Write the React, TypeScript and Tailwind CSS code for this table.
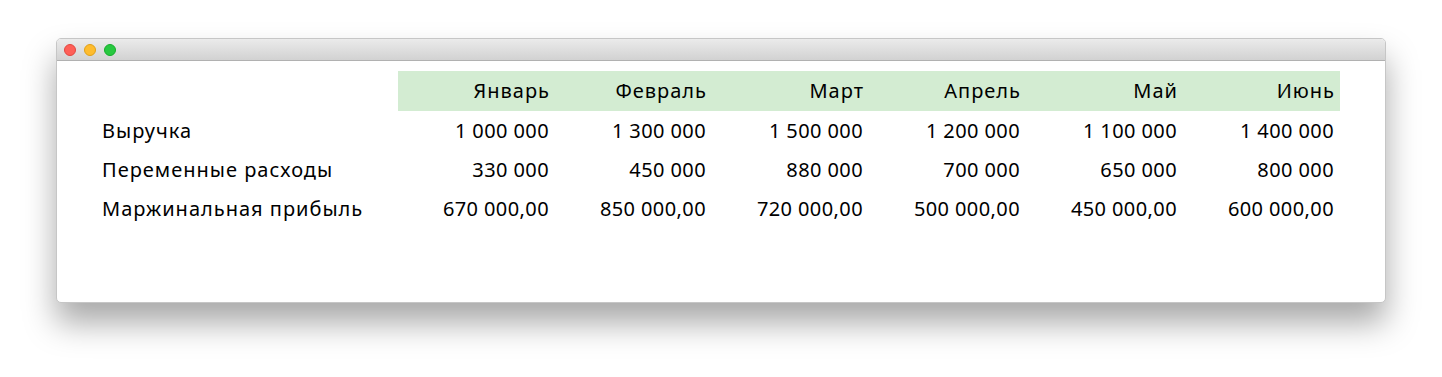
export default function App() {
    const months = ["Январь", "Февраль", "Март", "Апрель", "Май", "Июнь"]
    const rows = [
        { label: "Выручка", values: ["1 000 000", "1 300 000", "1 500 000", "1 200 000", "1 100 000", "1 400 000"] },
        { label: "Переменные расходы", values: ["330 000", "450 000", "880 000", "700 000", "650 000", "800 000"] },
        { label: "Маржинальная прибыль", values: ["670 000,00", "850 000,00", "720 000,00", "500 000,00", "450 000,00", "600 000,00"] },
    ]

    return (
        <div className="w-[1442px] h-[377px] bg-white pt-[38px] px-[56px]" style={{ fontFamily: '"Noto Sans", "Open Sans", sans-serif' }}>
            <div className="w-[1330px] h-[265px] bg-white rounded-[5px] border border-[#c6c6c6] shadow-[0_20px_32px_rgba(0,0,0,0.34)] flex flex-col overflow-hidden">
                <div className="h-[22px] shrink-0 bg-gradient-to-b from-[#ebebeb] to-[#d2d2d2] border-b border-[#b1b1b1] flex items-center gap-2 pl-[7px]">
                    <span className="w-3 h-3 rounded-full bg-[#fe5f57] border border-[#e2463f]" />
                    <span className="w-3 h-3 rounded-full bg-[#febc2e] border border-[#e1a116]" />
                    <span className="w-3 h-3 rounded-full bg-[#28c840] border border-[#14ae2a]" />
                </div>

                <div className="pt-[10px] pl-[39px] text-[20px] text-black">
                    <div className="grid grid-cols-[302px_repeat(6,157px)]">
                        <div className="h-10" />
                        {months.map((m) => (
                            <div key={m} className="h-10 bg-[#d3ecd2] flex items-center justify-end pr-[5px] tracking-[1px]">{m}</div>
                        ))}
                        {rows.map((r) => (
                            <>
                                <div key={r.label} className="h-[39px] flex items-center pl-[6px] tracking-[1px]">{r.label}</div>
                                {r.values.map((v, i) => (
                                    <div key={r.label + i} className="h-[39px] flex items-center justify-end pr-[6px] tracking-[0.4px]">{v}</div>
                                ))}
                            </>
                        ))}
                    </div>
                </div>
            </div>
        </div>
    )
}
